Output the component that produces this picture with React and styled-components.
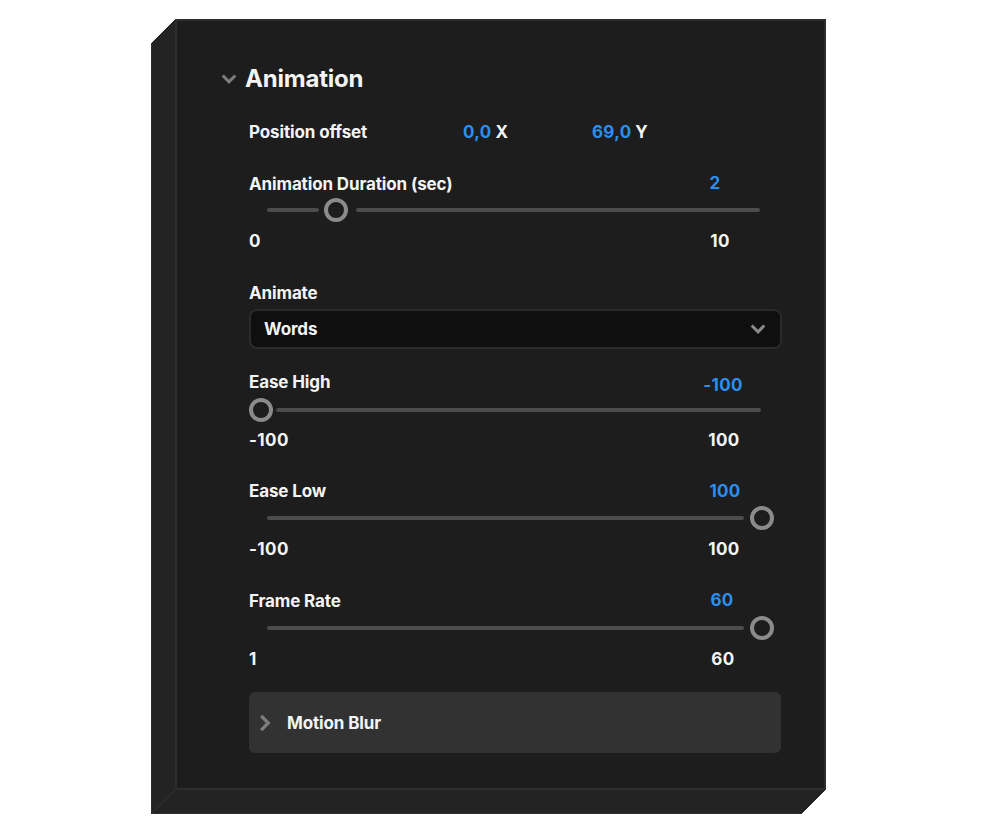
import React from "react";
import styled, { createGlobalStyle } from "styled-components";

const Global = createGlobalStyle`
  html, body { margin: 0; padding: 0; background: #fff; }
  body { font-family: Inter, "Noto Sans", sans-serif; }
  #root { width: 1000px; height: 826px; overflow: hidden; }
`;

const extrude = Array.from({ length: 24 }, (_, i) => {
  const n = i + 1;
  return `${-n}px ${n}px 0 0 ${n === 24 ? "#2d2d2d" : "#232323"}`;
}).join(", ");

const Panel = styled.section`
  position: relative;
  box-sizing: border-box;
  width: 651px;
  height: 771px;
  margin: 19px 0 0 175px;
  padding: 42px 43px 0 44px;
  background: #1d1d1d;
  border: 2px solid #2d2d2d;
  box-shadow: ${extrude};
  color: #f4f4f4;
  font-weight: 700;
  font-size: 17px;
  letter-spacing: -0.13px;
  line-height: 20px;
`;

const Seam = styled.svg`
  position: absolute;
  left: -26px;
  bottom: -26px;
  width: 26px;
  height: 26px;
`;

const Heading = styled.h2`
  display: flex;
  align-items: center;
  gap: 8px;
  height: 32px;
  margin: 0 0 27px;
  font-size: 24px;
  line-height: 32px;
  font-weight: 700;
  letter-spacing: -0.2px;
`;

const Content = styled.div`
  margin-left: 28px;
  width: 532px;
`;

const OffsetRow = styled.div`
  display: grid;
  grid-template-columns: 214px 129px auto;
  height: 20px;
`;

const Blue = styled.span`
  color: #2b8ff0;
  letter-spacing: 0.3px;
`;

const Group = styled.div`
  height: ${(p) => p.$height}px;
  margin-top: ${(p) => p.$top}px;
`;

const LabelRow = styled.div`
  position: relative;
  height: 20px;
`;

const Value = styled(Blue)`
  position: absolute;
  top: ${(p) => p.$up}px;
  left: ${(p) => p.$center}px;
  transform: translateX(-50%);
`;

const Slider = styled.div`
  display: flex;
  align-items: center;
  height: 24px;
  margin-top: ${(p) => p.$top ?? 4}px;
  padding-left: ${(p) => p.$lead}px;
  width: ${(p) => p.$width}px;
  box-sizing: border-box;
`;

const Track = styled.div`
  height: 4px;
  border-radius: 2px;
  background: #4c4c4c;
  flex: ${(p) => (p.$w ? `0 0 ${p.$w}px` : "1 1 0")};
`;

const Thumb = styled.div`
  box-sizing: border-box;
  flex: 0 0 24px;
  height: 24px;
  margin: 0 ${(p) => p.$after}px 0 ${(p) => p.$before}px;
  border: 4px solid #8b8b8b;
  border-radius: 50%;
  background: #1d1d1d;
`;

const Range = styled.div`
  position: relative;
  height: 20px;
  margin-top: ${(p) => p.$top ?? 9}px;
  letter-spacing: 0.4px;
`;

const RangeMax = styled.span`
  position: absolute;
  top: 0;
  left: ${(p) => p.$center}px;
  transform: translateX(-50%);
`;

const Select = styled.div`
  box-sizing: border-box;
  display: flex;
  align-items: center;
  justify-content: space-between;
  width: 533px;
  height: 40px;
  margin-top: 6px;
  padding: 0 14px 0 13px;
  background: #0f0f0f;
  border: 2px solid #2a2a2a;
  border-radius: 8px;
`;

const Accordion = styled.div`
  box-sizing: border-box;
  display: flex;
  align-items: center;
  gap: 13px;
  height: 61px;
  margin-top: 24px;
  padding-left: 7px;
  background: #323232;
  border-radius: 6px;
`;

const Chevron = ({ size = 16, dir = "down", color = "#7d7d7d" }) => (
  <svg width={size} height={size} viewBox="0 0 14 14" fill="none" stroke={color} strokeWidth="2.6" style={{ flex: "none" }}>
    {dir === "down" ? <path d="M1.5 4l5.5 5.5L12.5 4" /> : <path d="M4 1.5L9.5 7 4 12.5" />}
  </svg>
);

const SliderBlock = ({ label, value, center, up = 0, before, after, lead, leftW, width, min, max, maxCenter, top, rangeTop, marginTop, height }) => (
  <Group $top={marginTop} $height={height}>
    <LabelRow>
      {label}
      <Value $center={center} $up={up}>{value}</Value>
    </LabelRow>
    <Slider $lead={lead} $width={width} $top={top}>
      {leftW ? <Track $w={leftW} /> : null}
      <Thumb $before={before} $after={after} />
      {after ? <Track /> : null}
    </Slider>
    <Range $top={rangeTop}>
      {min}
      <RangeMax $center={maxCenter}>{max}</RangeMax>
    </Range>
  </Group>
);

export default function App() {
  return (
    <>
      <Global />
      <Panel>
        <Seam viewBox="0 0 26 26"><path d="M26 0L1 25" stroke="#2d2d2d" strokeWidth="1.4" /></Seam>
        <Heading>
          <Chevron />
          Animation
        </Heading>
        <Content>
          <OffsetRow>
            <span>Position offset</span>
            <span><Blue>0,0</Blue> X</span>
            <span><Blue>69,0</Blue> Y</span>
          </OffsetRow>
          <SliderBlock marginTop={32} height={77} label="Animation Duration (sec)" value="2" center={466} up={-1} lead={18} leftW={52} before={5} after={8} width={511} min="0" max="10" maxCenter={471} />
          <Group $top={32} $height={66}>
            <LabelRow>Animate</LabelRow>
            <Select>
              Words
              <Chevron color="#8a8a8a" />
            </Select>
          </Group>
          <SliderBlock marginTop={23} height={77} label="Ease High" value="-100" center={474} up={3} lead={0} before={0} after={3} top={6} rangeTop={8} width={512} min="-100" max="100" maxCenter={475} />
          <SliderBlock marginTop={32} height={77} label="Ease Low" value="100" center={476} up={0} lead={18} leftW={477} before={6} after={0} width={525} min="-100" max="100" maxCenter={475} top={5} rangeTop={9} />
          <SliderBlock marginTop={33} height={77} label="Frame Rate" value="60" center={473} up={-1} lead={18} leftW={477} before={6} after={0} width={525} min="1" max="60" maxCenter={474} top={5} rangeTop={9} />
          <Accordion>
            <Chevron dir="right" size={18} />
            Motion Blur
          </Accordion>
        </Content>
      </Panel>
    </>
  );
}
